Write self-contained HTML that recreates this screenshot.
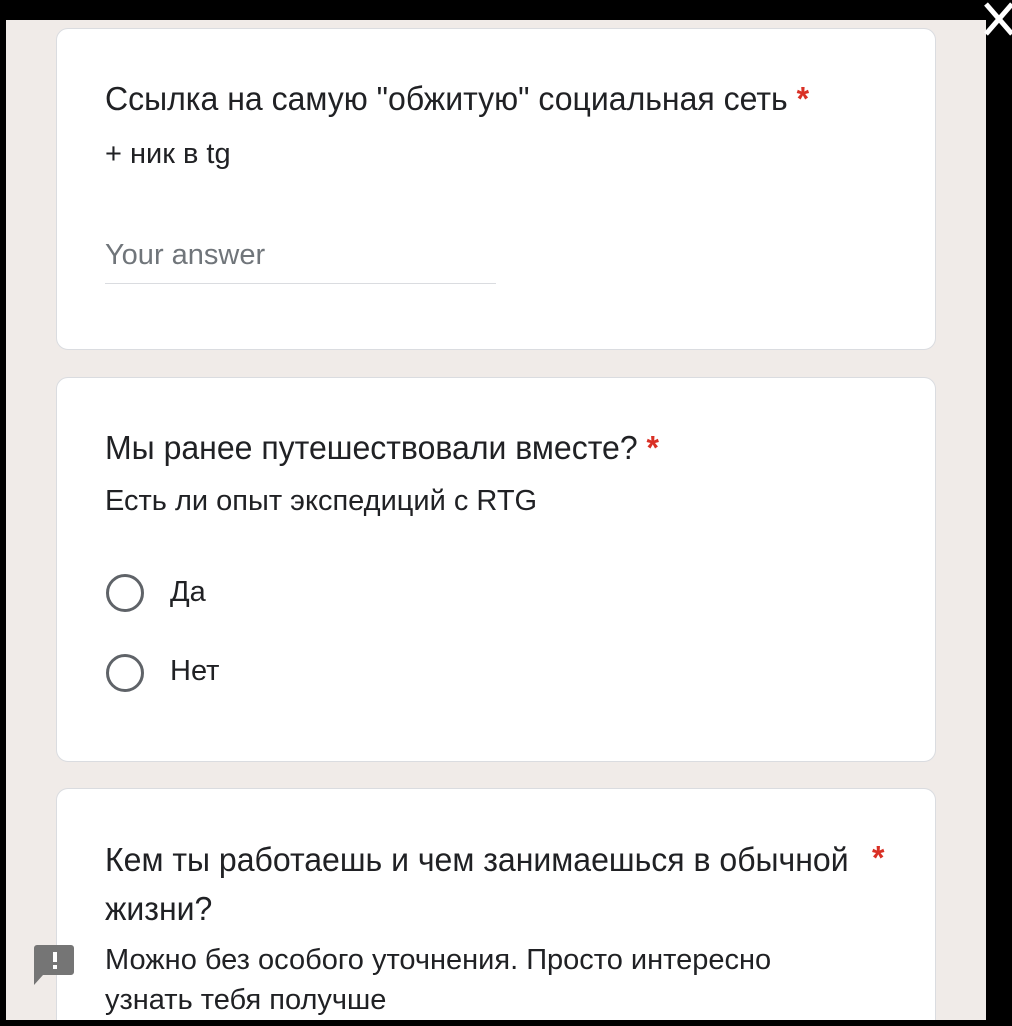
<!DOCTYPE html>
<html style="overflow:hidden"><head><meta charset="utf-8"><style>
*{margin:0;padding:0;box-sizing:border-box}
body{width:1012px;height:1026px;background:#000;position:relative;overflow:hidden;font-family:"Liberation Sans","Noto Sans CJK SC",sans-serif;color:#202124}
.bg{position:absolute;left:6px;top:20px;width:980px;height:1000px;background:#f0ebe8}
.card{position:absolute;left:56px;width:880px;background:#fff;border:1px solid #dadce0;border-radius:12px}
.t{position:absolute;left:105px;font-size:33px;letter-spacing:0;white-space:nowrap;transform:scaleX(0.97);transform-origin:0 0}
.s{position:absolute;left:105px;font-size:29px;letter-spacing:0;white-space:nowrap}
.req{color:#d93025;font-weight:bold}
.radio{position:absolute;left:106px;width:38px;height:38px;border:3.5px solid #5f6368;border-radius:50%}
</style></head><body>
<div class="bg"></div>
<div class="card" style="top:28px;height:322px"></div>
<div class="card" style="top:377px;height:385px"></div>
<div class="card" style="top:788px;height:232px;border-bottom:none;border-radius:12px 12px 0 0"></div>

<div class="t" style="top:80px">Ссылка на самую "обжитую" социальная сеть <span class="req">*</span></div>
<div class="s" style="top:138px">+ ник в tg</div>
<div class="s" style="top:239px;color:#70757a">Your answer</div>
<div style="position:absolute;left:105px;top:283px;width:391px;height:1px;background:#dadce0"></div>

<div class="t" style="top:429px">Мы ранее путешествовали вместе? <span class="req">*</span></div>
<div class="s" style="top:485px">Есть ли опыт экспедиций с RTG</div>
<div class="radio" style="top:574px"></div>
<div class="s" style="left:170px;top:576px">Да</div>
<div class="radio" style="top:654px"></div>
<div class="s" style="left:170px;top:655px">Нет</div>

<div class="t" style="top:841px">Кем ты работаешь и чем занимаешься в обычной</div>
<div class="t" style="left:872px;top:839px"><span class="req">*</span></div>
<div class="t" style="top:890px">жизни?</div>
<div class="s" style="top:944px">Можно без особого уточнения. Просто интересно</div>
<div class="s" style="top:984px">узнать тебя получше</div>

<svg style="position:absolute;left:33px;top:944px" width="42" height="42" viewBox="0 0 42 42">
<path d="M4 1h34a3 3 0 0 1 3 3v24a3 3 0 0 1-3 3H10L1 41V4a3 3 0 0 1 3-3z" fill="#757575"/>
<rect x="20" y="8" width="4" height="10" fill="#fff"/><rect x="20" y="21" width="4" height="4" fill="#fff"/>
</svg>
<div style="position:absolute;left:0;top:1020px;width:1012px;height:6px;background:#000"></div>
<svg style="position:absolute;left:982px;top:0" width="30" height="40" viewBox="0 0 30 40">
<path d="M4 4L30 34M30 4L4 34" stroke="#fff" stroke-width="5"/>
</svg>
</body></html>
